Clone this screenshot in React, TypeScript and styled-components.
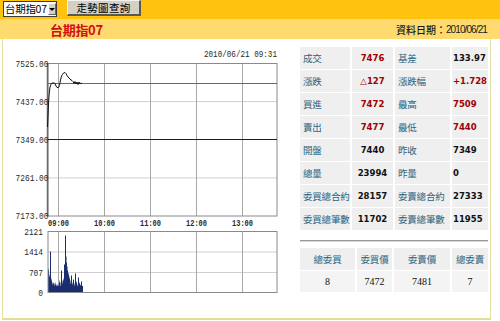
import React from "react";
import styled, { createGlobalStyle } from "styled-components";

const Global = createGlobalStyle`
  html, body { margin: 0; padding: 0; background: #fff; }
  body { font-family: "Noto Sans CJK TC", "Liberation Sans", sans-serif; }
`;

const Page = styled.div`
  width: 500px;
  height: 321px;
  overflow: hidden;
  background: #fff;
`;

const TopBar = styled.div`
  height: 19px;
  background: #ffc20e;
  display: flex;
  align-items: flex-start;
  padding-left: 3px;
  gap: 10px;
`;

const SelectBox = styled.div`
  margin-top: 1px;
  width: 54px;
  height: 16px;
  box-sizing: border-box;
  background: #fff;
  border: 1px solid #3a3a3a;
  display: flex;
  align-items: stretch;
`;

const SelectText = styled.span`
  flex: 1;
  font-size: 10.5px;
  line-height: 14px;
  padding-left: 1px;
  color: #000;
  white-space: nowrap;
  letter-spacing: -0.3px;
`;

const SelectArrow = styled.span`
  width: 10px;
  margin: 1px;
  background: #d4d0c8;
  border-left: 1px solid #fff;
  border-top: 1px solid #fff;
  border-right: 1px solid #666;
  border-bottom: 1px solid #666;
  box-sizing: border-box;
  display: flex;
  align-items: center;
  justify-content: center;
  &::after {
    content: "";
    border-left: 3px solid transparent;
    border-right: 3px solid transparent;
    border-top: 3px solid #000;
  }
`;

const QueryButton = styled.div`
  width: 74px;
  height: 16px;
  box-sizing: border-box;
  background: #d4d0c8;
  border-top: 1px solid #f4f2ee;
  border-left: 1px solid #f4f2ee;
  border-right: 2px solid #5a5850;
  border-bottom: 2px solid #5a5850;
  display: flex;
  align-items: center;
  justify-content: center;
  font-size: 10.5px;
  color: #000;
  letter-spacing: 0.3px;
`;

const TitleBar = styled.div`
  height: 20px;
  background: #ffda6e;
  display: flex;
  align-items: center;
  justify-content: space-between;
  padding: 0 13px 0 50px;
`;

const Title = styled.span`
  color: #d21010;
  font-weight: 700;
  font-size: 13px;
  letter-spacing: -0.3px;
`;

const DateInfo = styled.span`
  color: #1a1a1a;
  font-size: 10px;
  font-weight: 500;
  display: flex;
  align-items: center;
`;

const DateNum = styled.span`
  font-family: "Liberation Sans", sans-serif;
  font-size: 10px;
  letter-spacing: -0.9px;
`;

const Content = styled.div`
  margin: 0 9px 0 2px;
  height: 279px;
  border-left: 1px solid #e4e0a4;
  border-right: 1px solid #e4e0a4;
  border-bottom: 2px solid #e2de98;
  display: flex;
  align-items: flex-start;
`;

const ChartSvg = styled.svg`
  display: block;
  flex-shrink: 0;
`;

const AxisText = styled.text<{ $bold?: boolean }>`
  font-family: "Liberation Mono", monospace;
  font-size: 9.5px;
  fill: #2a2a2a;
  font-weight: ${(p) => (p.$bold ? 700 : 400)};
`;

const InfoColumn = styled.div`
  padding: 8px 0 0 5px;
  width: 188px;
  display: flex;
  flex-direction: column;
`;

const InfoGrid = styled.div`
  display: grid;
  grid-template-columns: 50px 41px 55px 36px;
  column-gap: 2px;
  row-gap: 1px;
  grid-auto-rows: 22px;
`;

const LabelCell = styled.div`
  background: #efefef;
  display: flex;
  align-items: center;
  padding-left: 3px;
  font-size: 9.5px;
  color: #2b6480;
  white-space: nowrap;
  letter-spacing: -0.2px;
`;

const ValueCell = styled.div<{ $red?: boolean; $center?: boolean }>`
  background: #efefef;
  display: flex;
  align-items: center;
  justify-content: ${(p) => (p.$center ? "center" : "flex-start")};
  padding-left: ${(p) => (p.$center ? "0" : "1px")};
  font-family: "DejaVu Sans", sans-serif;
  font-weight: 700;
  font-size: 8.5px;
  color: ${(p) => (p.$red ? "#a00000" : "#111")};
  white-space: nowrap;
`;

const Rule = styled.div`
  margin-top: 10px;
  height: 0;
  border-top: 1px solid #9a9a9a;
  border-bottom: 1px solid #d8d8d8;
`;

const OrderGrid = styled.div`
  margin-top: 6px;
  display: grid;
  grid-template-columns: 55px 35px 56px 36px;
  column-gap: 2px;
  row-gap: 1px;
  grid-template-rows: 22px 21px;
`;

const OrderHead = styled.div`
  background: #efefef;
  display: flex;
  align-items: center;
  justify-content: center;
  font-size: 9.5px;
  color: #2b6480;
  white-space: nowrap;
  letter-spacing: -0.2px;
`;

const OrderValue = styled.div`
  background: #f4f4f4;
  display: flex;
  align-items: center;
  justify-content: center;
  font-family: "Liberation Serif", serif;
  font-size: 10px;
  color: #111;
`;

const volDark = [
  22, 16, 41, 12, 8, 9, 7, 8, 6, 5, 7, 10, 6, 22, 9, 12, 28, 57, 30, 22, 18, 14,
  9, 17, 8, 13, 7, 19, 10, 6, 15, 9, 7, 11, 5,
];
const volLight = [
  24, 18, 30, 14, 10, 10, 9, 10, 8, 8, 9, 12, 10, 14, 12, 14, 20, 30, 36, 26,
  20, 16, 12, 15, 10, 12, 9, 14, 11, 8, 12, 10, 8, 9, 4,
];

const pricePath =
  "M47.5,127 L48,116 L48.5,104 L49,96 L49.5,91 L50,87 L51,84.5 L52,83 L54,83 L55,83.5 L56,86 L57,87.5 L58.5,87.5 L59.5,85.5 L60.5,80 L61.5,76 L62.5,74.5 L63.5,73 L65,72.5 L66,73.5 L67,75.5 L68,77 L69,78 L70,79 L71,80 L72,80.5 L73,81.5 L74,83.5 L75,81.5 L76,84 L77,82 L78,84.5 L79,82 L80,84 L81,83 L82,83.5";

const vGrid = [58.5, 104.5, 150.5, 196.5, 242.5];
const hours = ["09:00", "10:00", "11:00", "12:00", "13:00"];
const priceLabels: [string, number][] = [
  ["7525.00", 63.5],
  ["7437.00", 101.6],
  ["7349.00", 139.7],
  ["7261.00", 177.9],
  ["7173.00", 216],
];
const volLabels: [string, number][] = [
  ["2121", 231.5],
  ["1414", 252],
  ["707", 272.5],
  ["0", 293],
];

function Chart() {
  return (
    <ChartSvg width={292} height={265} viewBox="3 39 292 265">
      <AxisText x={277} y={57} textAnchor="end" textLength={73} lengthAdjust="spacingAndGlyphs">
        2010/06/21 09:31
      </AxisText>

      {/* price panel */}
      <rect x={48} y={63.5} width={229} height={152.5} fill="#fff" />
      {[101.6, 177.9].map((y) => (
        <line key={y} x1={48} x2={277} y1={y} y2={y} stroke="#cfcfcf" strokeWidth={1} />
      ))}
      {vGrid.map((x) => (
        <line key={x} x1={x} x2={x} y1={63.5} y2={216} stroke="#a8a8a8" strokeWidth={1} />
      ))}
      <rect x={48} y={63.5} width={229} height={152.5} fill="none" stroke="#8a8a8a" strokeWidth={1} />
      <line x1={47.5} x2={47.5} y1={63} y2={216.5} stroke="#6a6a6a" strokeWidth={1.5} />
      <line x1={48} x2={277} y1={139.5} y2={139.5} stroke="#4a0808" strokeWidth={1} />
      <line x1={48} x2={277} y1={83.5} y2={83.5} stroke="#b54848" strokeWidth={1} />
      <path d={pricePath} fill="none" stroke="#111" strokeWidth={1} />
      {priceLabels.map(([t, y]) => (
        <AxisText key={t} x={48.5} y={y + 3} textAnchor="end" textLength={33} lengthAdjust="spacingAndGlyphs">
          {t}
        </AxisText>
      ))}
      {hours.map((h, i) => (
        <AxisText
          key={h}
          $bold
          x={vGrid[i] - 10.5}
          y={226}
          textLength={21}
          lengthAdjust="spacingAndGlyphs"
        >
          {h}
        </AxisText>
      ))}

      {/* volume panel */}
      <rect x={48} y={231.5} width={229} height={61} fill="#fff" />
      {[252, 272.5].map((y) => (
        <line key={y} x1={48} x2={277} y1={y} y2={y} stroke="#cfcfcf" strokeWidth={1} />
      ))}
      {vGrid.map((x) => (
        <line key={x} x1={x} x2={x} y1={231.5} y2={292.5} stroke="#a8a8a8" strokeWidth={1} />
      ))}
      {volLight.map((h, i) => (
        <rect key={"l" + i} x={48 + i} y={292.5 - h} width={1} height={h} fill="#8d98b8" />
      ))}
      {volDark.map((h, i) => (
        <rect key={"d" + i} x={48 + i} y={292.5 - h} width={1} height={h} fill="#1c2c70" />
      ))}
      <rect x={48} y={286} width={35} height={6.5} fill="#1c2c70" />
      <rect x={48} y={231.5} width={229} height={61} fill="none" stroke="#8a8a8a" strokeWidth={1} />
      {volLabels.map(([t, y]) => (
        <AxisText key={t} x={43} y={y + 3} textAnchor="end" textLength={t.length * 4.7} lengthAdjust="spacingAndGlyphs">
          {t}
        </AxisText>
      ))}
    </ChartSvg>
  );
}

type Row = [string, string, boolean, string, string, boolean];
const rows: Row[] = [
  ["成交", "7476", true, "基差", "133.97", false],
  ["漲跌", "△127", true, "漲跌幅", "+1.728", true],
  ["買進", "7472", true, "最高", "7509", true],
  ["賣出", "7477", true, "最低", "7440", true],
  ["開盤", "7440", false, "昨收", "7349", false],
  ["總量", "23994", false, "昨量", "0", false],
  ["委買總合約", "28157", false, "委賣總合約", "27333", false],
  ["委買總筆數", "11702", false, "委賣總筆數", "11955", false],
];

export default function App() {
  return (
    <Page>
      <Global />
      <TopBar>
        <SelectBox>
          <SelectText>台期指07</SelectText>
          <SelectArrow />
        </SelectBox>
        <QueryButton>走勢圖查詢</QueryButton>
      </TopBar>
      <TitleBar>
        <Title>台期指07</Title>
        <DateInfo>
          資料日期：<DateNum>2010/06/21</DateNum>
        </DateInfo>
      </TitleBar>
      <Content>
        <Chart />
        <InfoColumn>
          <InfoGrid>
            {rows.map((r) => (
              <React.Fragment key={r[0]}>
                <LabelCell>{r[0]}</LabelCell>
                <ValueCell $red={r[2]} $center>
                  {r[1]}
                </ValueCell>
                <LabelCell>{r[3]}</LabelCell>
                <ValueCell $red={r[5]}>{r[4]}</ValueCell>
              </React.Fragment>
            ))}
          </InfoGrid>
          <Rule />
          <OrderGrid>
            <OrderHead>總委買</OrderHead>
            <OrderHead>委買價</OrderHead>
            <OrderHead>委賣價</OrderHead>
            <OrderHead>總委賣</OrderHead>
            <OrderValue>8</OrderValue>
            <OrderValue>7472</OrderValue>
            <OrderValue>7481</OrderValue>
            <OrderValue>7</OrderValue>
          </OrderGrid>
        </InfoColumn>
      </Content>
    </Page>
  );
}
